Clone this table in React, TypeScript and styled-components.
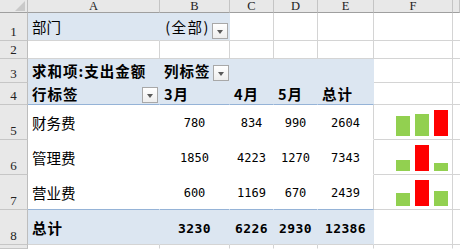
import styled, { createGlobalStyle } from "styled-components";

type Line = "none" | "grid" | "blue";

const GlobalStyle = createGlobalStyle`
  html, body {
    margin: 0;
    padding: 0;
    background: #fff;
    overflow: hidden;
  }
  body {
    font-family: "Noto Sans CJK SC", sans-serif;
    font-size: 14.5px;
    color: #000;
  }
`;

const lineColor = (l?: Line) =>
  l === "grid" ? "#d4d4d4" : l === "blue" ? "#95b3d7" : "transparent";

const Sheet = styled.div`
  display: grid;
  grid-template-columns: 28px 132px 70px 44px 44px 56px 79px 7px;
  grid-template-rows: 13px 28px 18px 24px 22px 35px 35px 35px 35px 4px;
  width: 460px;
  height: 249px;
  overflow: hidden;
`;

const Corner = styled.div`
  background: #e8e8e8;
  border-right: 1px solid #bdbdbd;
  border-bottom: 1px solid #9f9f9f;
  box-sizing: border-box;
  display: flex;
  justify-content: flex-end;
  align-items: flex-end;
  padding: 0 2px 1px 0;
`;

const ColHead = styled.div`
  background: #e8e8e8;
  border-right: 1px solid #c4c4c4;
  border-bottom: 1px solid #9f9f9f;
  box-sizing: border-box;
  display: flex;
  align-items: center;
  justify-content: center;
  font-family: "Liberation Serif", serif;
  font-size: 12.5px;
  line-height: 1;
  color: #222;
`;

const RowHead = styled.div`
  background: #e8e8e8;
  border-right: 1px solid #bdbdbd;
  border-bottom: 1px solid #c6c6c6;
  box-sizing: border-box;
  display: flex;
  align-items: flex-end;
  justify-content: center;
  padding-bottom: 2px;
  font-family: "Liberation Serif", serif;
  font-size: 13px;
  line-height: 1;
  color: #222;
`;

const Cell = styled.div<{
  $fill?: boolean;
  $right?: Line;
  $bottom?: Line;
  $center?: boolean;
  $bold?: boolean;
}>`
  display: flex;
  align-items: center;
  justify-content: ${(p) => (p.$center ? "center" : "flex-start")};
  box-sizing: border-box;
  min-width: 0;
  padding: 2px 4px 0;
  white-space: nowrap;
  overflow: hidden;
  background: ${(p) => (p.$fill ? "#dce6f1" : "#fff")};
  border-right: 1px solid ${(p) => lineColor(p.$right)};
  border-bottom: 1px solid ${(p) => lineColor(p.$bottom)};
  font-weight: ${(p) => (p.$bold ? 700 : 400)};
  letter-spacing: ${(p) => (p.$bold ? "1px" : "0")};
  line-height: 1;
`;

const FilterCell = styled(Cell)<{ $end?: boolean }>`
  justify-content: ${(p) => (p.$end ? "flex-end" : "space-between")};
  gap: 2px;
  padding-right: 1px;
`;

const AllLabel = styled.span`
  letter-spacing: 1.5px;
`;

const Drop = styled.span`
  flex: none;
  align-self: flex-end;
  margin-bottom: 1px;
  width: 16px;
  height: 16px;
  box-sizing: border-box;
  border: 1px solid #a8a8a8;
  background: linear-gradient(#ffffff, #eeeeee);
  display: flex;
  align-items: center;
  justify-content: center;
  &::after {
    content: "";
    margin-top: 2px;
    border-left: 3.5px solid transparent;
    border-right: 3.5px solid transparent;
    border-top: 4px solid #5a5a5a;
  }
`;

const Num = styled.span<{ $bold?: boolean }>`
  font-family: "DejaVu Sans Mono", monospace;
  font-size: ${(p) => (p.$bold ? "13px" : "12px")};
  font-weight: ${(p) => (p.$bold ? 700 : 400)};
  letter-spacing: ${(p) => (p.$bold ? "0.4px" : "0")};
`;

const Spark = styled.div`
  display: flex;
  align-items: flex-end;
  justify-content: flex-end;
  gap: 5px;
  box-sizing: border-box;
  padding: 0 4px 3px 0;
  background: #fff;
  border-right: 1px solid #d4d4d4;
  border-bottom: 1px solid #d4d4d4;
`;

const Bar = styled.div<{ $max?: boolean }>`
  width: 14px;
  background: ${(p) => (p.$max ? "#ff0000" : "#92d050")};
`;

const rows = [
  { name: "财务费", vals: [780, 834, 990], total: 2604 },
  { name: "管理费", vals: [1850, 4223, 1270], total: 7343 },
  { name: "营业费", vals: [600, 1169, 670], total: 2439 },
];
const totals = [3230, 6226, 2930, 12386];
const cols = ["A", "B", "C", "D", "E", "F"];

const Blank = ({ n }: { n: number }) => (
  <>
    {Array.from({ length: n }, (_, i) => (
      <Cell key={i} $right="grid" $bottom="grid" />
    ))}
  </>
);

const App = () => {
  return (
    <>
      <GlobalStyle />
      <Sheet>
        <Corner>
          <svg width="10" height="10" viewBox="0 0 10 10">
            <polygon points="10,0 10,10 0,10" fill="#c9c9c9" />
          </svg>
        </Corner>
        {cols.map((c) => (
          <ColHead key={c}>{c}</ColHead>
        ))}
        <ColHead />

        {/* row 1 */}
        <RowHead>1</RowHead>
        <Cell $fill $bottom="grid">部门</Cell>
        <FilterCell $fill $bottom="grid" $end>
          <AllLabel>(全部)</AllLabel>
          <Drop />
        </FilterCell>
        <Blank n={5} />

        {/* row 2 */}
        <RowHead>2</RowHead>
        <Blank n={7} />

        {/* row 3 */}
        <RowHead>3</RowHead>
        <Cell $fill $bold>求和项:支出金额</Cell>
        <FilterCell $fill $bold>
          列标签
          <Drop />
        </FilterCell>
        <Cell $fill />
        <Cell $fill />
        <Cell $fill />
        <Blank n={2} />

        {/* row 4 */}
        <RowHead>4</RowHead>
        <FilterCell $fill $bold $bottom="blue">
          行标签
          <Drop />
        </FilterCell>
        <Cell $fill $bold $bottom="blue">3月</Cell>
        <Cell $fill $bold $bottom="blue">4月</Cell>
        <Cell $fill $bold $bottom="blue">5月</Cell>
        <Cell $fill $bold $bottom="blue">总计</Cell>
        <Blank n={2} />

        {/* rows 5-7 */}
        {rows.map((r, i) => {
          const last = i === rows.length - 1 ? "blue" : "none";
          const max = Math.max(...r.vals);
          return (
            <div key={r.name} style={{ display: "contents" }}>
              <RowHead>{i + 5}</RowHead>
              <Cell $bottom={last}>{r.name}</Cell>
              {r.vals.map((v, j) => (
                <Cell key={j} $center $bottom={last}>
                  <Num>{v}</Num>
                </Cell>
              ))}
              <Cell $center $right="grid" $bottom={last}>
                <Num>{r.total}</Num>
              </Cell>
              <Spark>
                {r.vals.map((v, j) => (
                  <Bar
                    key={j}
                    $max={v === max}
                    style={{ height: Math.round((v / max) * 26) }}
                  />
                ))}
              </Spark>
              <Cell $bottom="grid" />
            </div>
          );
        })}

        {/* row 8 */}
        <RowHead>8</RowHead>
        <Cell $fill $bold $bottom="grid">总计</Cell>
        {totals.map((t, j) => (
          <Cell key={j} $fill $center $bottom="grid">
            <Num $bold>{t}</Num>
          </Cell>
        ))}
        <Blank n={2} />

        {/* row 9 (partial) */}
        <RowHead />
        {Array.from({ length: 7 }, (_, i) => (
          <Cell key={i} $right="grid" />
        ))}
      </Sheet>
    </>
  );
};

export default App;
